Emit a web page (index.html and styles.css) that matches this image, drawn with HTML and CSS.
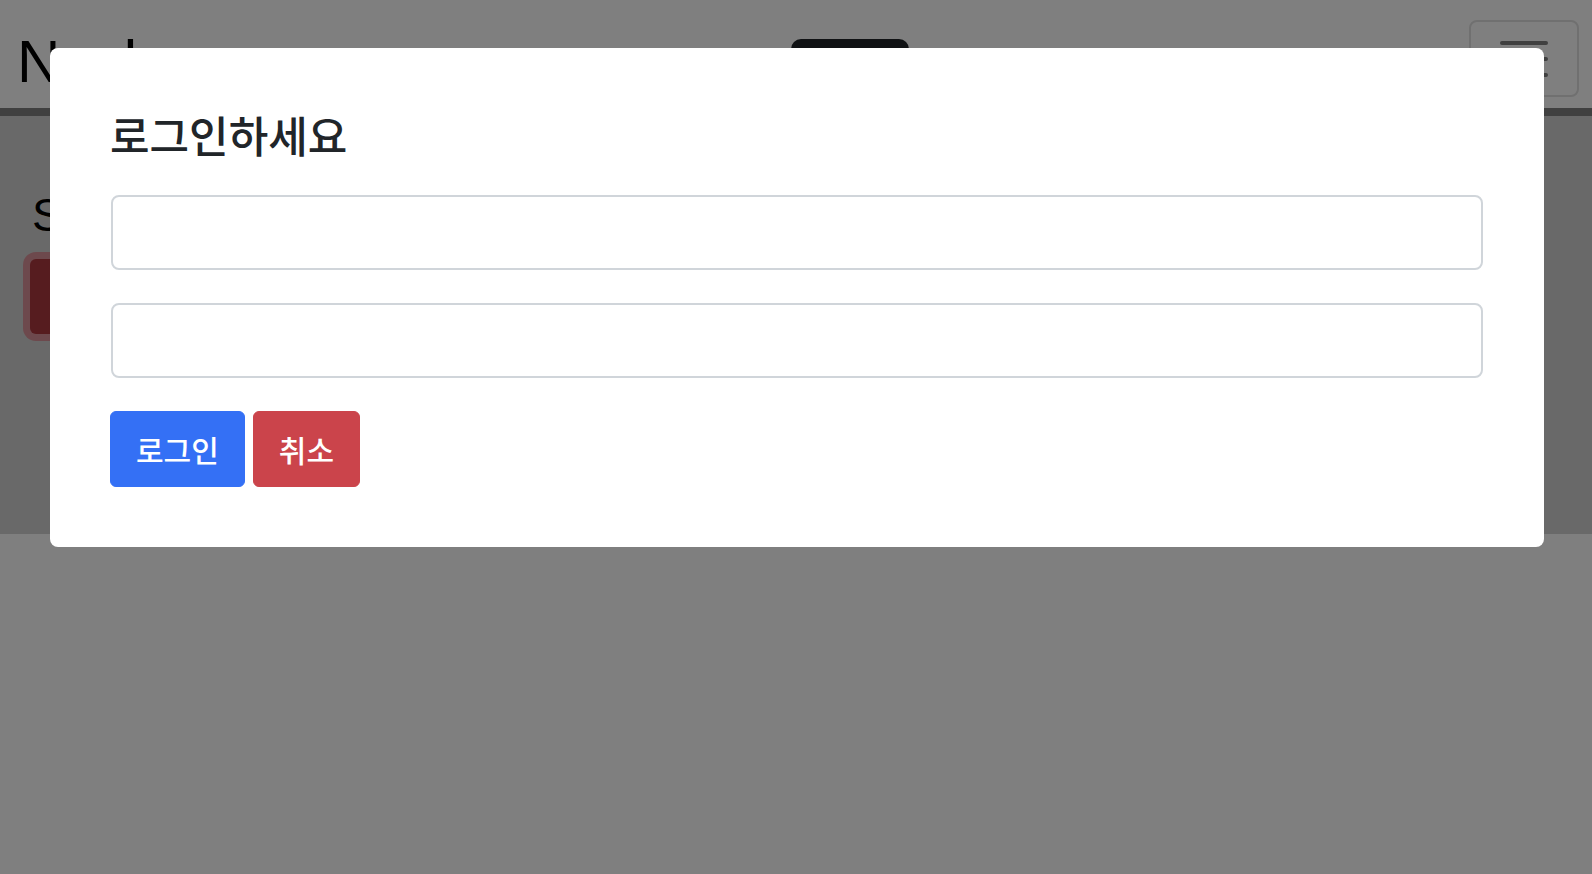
FILE: index.html
```html
<!DOCTYPE html>
<html lang="ko">
<head>
    <meta charset="UTF-8">
    <meta name="viewport" content="width=device-width, initial-scale=1.0">
    <title>로그인</title>
    <link rel="stylesheet" href="styles.css">
</head>
<body>

    <nav class="navbar">
        <a class="brand" href="#">Navbar</a>
        <button class="btn-dark">Menu <span class="badge">3</span></button>
        <button class="toggler">
            <span class="toggler-line"></span>
            <span class="toggler-line"></span>
            <span class="toggler-line"></span>
        </button>
    </nav>

    <main class="content">
        <h2 class="page-title">Sample page</h2>
        <button class="btn-danger-focus">Logout</button>
    </main>

    <div class="backdrop">
        <div class="modal-dialog">
            <h1 class="modal-title">로그인하세요</h1>
            <input class="form-input" type="text">
            <input class="form-input" type="password">
            <div class="btn-row">
                <button class="btn btn-primary">로그인</button>
                <button class="btn btn-danger">취소</button>
            </div>
        </div>
    </div>

</body>
</html>
```

FILE: styles.css
```css
body {
    margin: 0;
    font-family: 'Liberation Sans', Arial, sans-serif;
    background-color: #FFFFFF;
}

.navbar {
    display: flex;
    align-items: flex-start;
    height: 108px;
    padding: 0 13px 0 17px;
    background: #FFFFFF;
    border-bottom: 8px solid #808080;
}

.brand {
    font-size: 60px;
    color: #000;
    text-decoration: none;
    margin-top: 27px;
}

.btn-dark {
    margin-left: 581px;
    margin-top: 39px;
    width: 118px;
    height: 56px;
    background: #212529;
    color: #FFFFFF;
    border: none;
    border-radius: 10px;
    font-size: 20px;
    font-family: 'Liberation Sans', Arial, sans-serif;
    padding: 6px 17px 0 0;
    text-align: right;
}

.badge {
    display: inline-block;
    width: 20px;
    height: 20px;
    border-radius: 6px;
    background: #56646f;
    font-size: 12px;
}

.toggler {
    margin-left: auto;
    margin-top: 20px;
    width: 110px;
    height: 77px;
    background: transparent;
    border: 2px solid #e0e0e0;
    border-radius: 8px;
    display: flex;
    flex-direction: column;
    align-items: center;
    gap: 12px;
    padding-top: 19px;
}

.toggler-line {
    display: block;
    width: 48px;
    height: 4px;
    border-radius: 2px;
    background: #808080;
}

.content {
    height: 418px;
    background: #d3d3d3;
    padding: 72px 0 0 30px;
    box-sizing: border-box;
}

.page-title {
    margin: 0 0 17px 2px;
    font-size: 46px;
    font-weight: 400;
    color: #000;
}

.btn-danger-focus {
    width: 200px;
    height: 75px;
    background: #ad383e;
    border: none;
    border-radius: 6px;
    color: #FFFFFF;
    font-size: 28px;
    box-shadow: 0 0 0 7px rgba(225, 83, 97, 0.5);
}

.backdrop {
    position: fixed;
    top: 0;
    left: 0;
    right: 0;
    bottom: 0;
    background: rgba(0, 0, 0, 0.5);
}

.modal-dialog {
    margin: 48px 0 0 50px;
    width: 1494px;
    box-sizing: border-box;
    padding: 60px 61px;
    background: #FFFFFF;
    border-radius: 8px;
}

.modal-title {
    margin: 2px 0 37px -1px;
    font-family: 'Noto Sans CJK KR', 'Noto Sans', sans-serif;
    font-size: 43px;
    font-weight: 500;
    line-height: 48px;
    color: #212529;
}

.form-input {
    display: block;
    width: 100%;
    height: 75px;
    box-sizing: border-box;
    margin: 0 0 33px;
    border: 2px solid #d0d5da;
    border-radius: 8px;
    background: #FFFFFF;
}

.btn-row {
    display: flex;
    gap: 8px;
    margin-left: -1px;
}

.btn {
    font-family: 'Noto Sans CJK KR', 'Noto Sans', sans-serif;
    font-size: 30px;
    font-weight: 500;
    line-height: 42px;
    padding: 16px 25px;
    border: 1px solid transparent;
    border-radius: 6px;
    color: #FFFFFF;
    cursor: pointer;
}

.btn-primary {
    background-color: #3470f5;
    border-color: #3470f5;
}

.btn-danger {
    background-color: #cb444b;
    border-color: #cb444b;
}
```
